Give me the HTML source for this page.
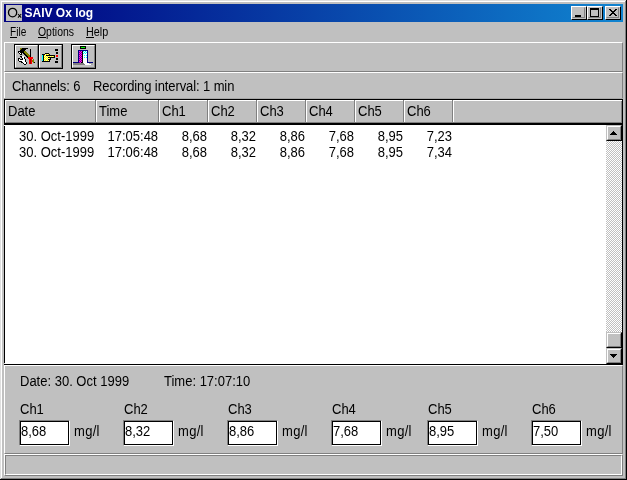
<!DOCTYPE html>
<html>
<head>
<meta charset="utf-8">
<title>SAIV Ox log</title>
<style>
html,body{margin:0;padding:0;}
body{width:627px;height:480px;overflow:hidden;background:#c0c0c0;position:relative;
  font-family:"Liberation Sans",sans-serif;font-size:13px;line-height:15px;color:#000;}
.a{position:absolute;}
.t{position:absolute;white-space:nowrap;line-height:15px;height:15px;filter:grayscale(1);transform:scaleY(1.06);transform-origin:0 12px;}
/* window frame */
#f0{left:0;top:0;width:627px;height:480px;background:#000;}
#f1{left:0;top:0;width:626px;height:479px;background:#dfdfdf;}
#f2{left:1px;top:1px;width:625px;height:478px;background:#808080;}
#f3{left:1px;top:1px;width:624px;height:477px;background:#fff;}
#f4{left:2px;top:2px;width:623px;height:476px;background:#c0c0c0;}
/* title */
#title{left:4px;top:4px;width:619px;height:18px;background:linear-gradient(to right,#000080 0%,#1084d0 100%);}
#ticon{left:6px;top:5px;width:16px;height:16px;background:#c0c0c0;}
#ttext{transform:none;left:24.5px;top:6px;color:#fff;font-weight:bold;font-size:12px;line-height:15px;}
.cb{position:absolute;top:6px;width:16px;height:14px;background:#c0c0c0;box-sizing:border-box;
  border:1px solid;border-color:#fff #000 #000 #fff;}
.cb i{position:absolute;left:0;top:0;width:13px;height:11px;box-sizing:border-box;border:1px solid;border-color:#c0c0c0 #808080 #808080 #c0c0c0;}
/* menu */
.m{position:absolute;top:25px;filter:grayscale(1);font-size:12px;line-height:15px;white-space:nowrap;transform-origin:0 50%;}
.ul{position:absolute;height:1px;background:#000;top:37px;}
/* raised panel */
.rp{position:absolute;box-sizing:border-box;border:1px solid;border-color:#fff #808080 #808080 #fff;background:#c0c0c0;}
/* toolbar buttons */
.tb{position:absolute;top:44px;width:25px;height:25px;box-sizing:border-box;border:1px solid #000;background:#c0c0c0;}
.tb i{position:absolute;left:0;top:0;width:23px;height:23px;box-sizing:border-box;border:1px solid;border-color:#fff #808080 #808080 #fff;}
/* header */
#hdr{left:4px;top:99px;width:619px;height:24px;box-sizing:border-box;border:1px solid #000;border-bottom:none;background:#c0c0c0;}
.hw{position:absolute;top:100px;width:1px;height:22px;background:#fff;}
.hg{position:absolute;top:100px;width:1px;height:22px;background:#808080;}
/* list */
#list{left:4px;top:123px;width:619px;height:242px;background:#fff;box-sizing:border-box;border:1px solid #000;border-top:2px solid #000;}
.sbb{position:absolute;left:606px;width:16px;height:16px;box-sizing:border-box;background:#c0c0c0;border:1px solid;border-color:#c0c0c0 #000 #000 #c0c0c0;}
.sbb i{position:absolute;left:0;top:0;width:14px;height:14px;box-sizing:border-box;border:1px solid;border-color:#fff #808080 #808080 #fff;}
#track{left:606px;top:141px;width:16px;height:191px;
  background-color:#c0c0c0;
  background-image:linear-gradient(45deg,#fff 25%,transparent 25%,transparent 75%,#fff 75%),linear-gradient(45deg,#fff 25%,transparent 25%,transparent 75%,#fff 75%);
  background-size:2px 2px;background-position:0 0,1px 1px;}
/* edit boxes */
.eb{position:absolute;top:420px;width:51px;height:26px;box-sizing:border-box;border:1px solid;border-color:#808080 #fff #fff #808080;background:#000;}
.eb i{position:absolute;left:1px;top:1px;width:47px;height:22px;background:#fff;}
</style>
</head>
<body>
<div class="a" id="f0"></div><div class="a" id="f1"></div><div class="a" id="f2"></div><div class="a" id="f3"></div><div class="a" id="f4"></div>

<!-- title bar -->
<div class="a" id="title"></div>
<div class="a" id="ticon"></div>
<svg class="a" style="left:6px;top:5px" width="16" height="16" viewBox="6 5 16 16"><ellipse cx="12.6" cy="12.6" rx="4.1" ry="4.3" fill="none" stroke="#000" stroke-width="1.35"/><path d="M18 14L21.2 17.6M21.2 14L18 17.6" stroke="#000" stroke-width="1.1" fill="none"/></svg>
<div class="t" id="ttext">SAIV Ox log</div>
<div class="cb" style="left:571px"><i></i><b class="a" style="left:3px;top:8px;width:6px;height:2px;background:#000"></b></div>
<div class="cb" style="left:587px"><i></i><b class="a" style="left:2px;top:1px;width:9px;height:9px;box-sizing:border-box;border:1px solid #000;border-top-width:2px"></b></div>
<div class="cb" style="left:605px"><i></i>
<svg class="a" style="left:3px;top:2px" width="8" height="7" viewBox="0 0 8 7"><path d="M0 0h2v1h-2zM6 0h2v1h-2zM1 1h2v1h-2zM5 1h2v1h-2zM2 2h4v1h-4zM3 3h2v1h-2zM2 4h4v1h-4zM1 5h2v1h-2zM5 5h2v1h-2zM0 6h2v1h-2zM6 6h2v1h-2z" fill="#000"/></svg></div>

<!-- menu -->
<div class="m" style="left:10px;transform:scaleX(0.84)">File</div>
<div class="m" style="left:38px;transform:scaleX(0.87)">Options</div>
<div class="m" style="left:86px;transform:scaleX(0.90)">Help</div>
<div class="ul" style="left:10px;width:7px"></div>
<div class="ul" style="left:38px;width:8px"></div>
<div class="ul" style="left:86px;width:8px"></div>

<!-- toolbar panel -->
<div class="rp" style="left:4px;top:42px;width:619px;height:30px"></div>
<div class="tb" style="left:14px"><i></i></div>
<div class="tb" style="left:38px"><i></i></div>
<div class="tb" style="left:71px"><i></i></div>

<!--ICONS-->
<svg class="a" style="left:17px;top:47px" width="18" height="18" viewBox="0 0 18 18" shape-rendering="crispEdges"><path fill="#808000" d="M3 1h2v1h-2zM3 2h1v1h-1zM7 4h2v1h-2zM7 5h3v1h-3zM8 6h3v1h-3zM9 7h3v1h-3zM10 8h3v1h-3zM11 9h2v1h-2zM16 12h1v1h-1zM15 13h2v1h-2zM15 14h2v1h-2zM16 15h1v1h-1z"/><path fill="#000" d="M5 1h6v1h-6zM4 2h5v1h-5zM13 2h1v1h-1zM3 3h5v1h-5zM13 3h1v1h-1zM1 4h6v1h-6zM13 4h1v1h-1zM1 5h1v1h-1zM3 5h4v1h-4zM13 5h1v1h-1zM2 6h1v1h-1zM4 6h1v1h-1zM6 6h2v1h-2zM13 6h1v1h-1zM3 7h2v1h-2zM7 7h2v1h-2zM13 7h1v1h-1zM8 8h2v1h-2zM13 8h1v1h-1zM3 9h2v1h-2zM9 9h2v1h-2zM13 9h1v1h-1zM4 10h1v1h-1zM7 10h1v1h-1zM10 10h1v1h-1zM1 11h2v1h-2zM5 11h1v1h-1zM7 11h1v1h-1zM1 12h1v1h-1zM3 12h3v1h-3zM8 12h1v1h-1zM1 13h1v1h-1zM8 13h1v1h-1zM2 14h3v1h-3zM8 14h1v1h-1zM4 15h2v1h-2zM9 15h1v1h-1zM17 15h1v1h-1zM6 16h1v1h-1zM9 16h1v1h-1zM7 17h2v1h-2z"/><path fill="#fff" d="M2 5h1v1h-1zM3 6h1v1h-1zM5 9h2v1h-2zM5 10h2v1h-2zM6 11h1v1h-1zM2 12h1v1h-1zM6 12h2v1h-2zM2 13h6v1h-6zM5 14h3v1h-3zM6 15h3v1h-3zM7 16h2v1h-2z"/><path fill="#ff0000" d="M11 10h5v1h-5zM11 11h5v1h-5zM12 12h1v1h-1zM14 12h1v1h-1zM12 13h1v1h-1zM14 13h1v1h-1zM12 14h1v1h-1zM14 14h1v1h-1zM12 15h1v1h-1zM14 15h1v1h-1zM12 16h1v1h-1zM14 16h1v1h-1z"/><path fill="#a00000" d="M13 12h1v1h-1zM13 13h1v1h-1zM13 14h1v1h-1zM13 15h1v1h-1zM13 16h1v1h-1z"/></svg>
<svg class="a" style="left:41px;top:48px" width="18" height="15" viewBox="0 0 18 15" shape-rendering="crispEdges"><path fill="#000" d="M14 1h3v1h-3zM14 2h3v1h-3zM15 4h2v1h-2zM4 5h4v1h-4zM15 5h2v1h-2zM1 6h3v1h-3zM8 6h1v1h-1zM2 7h1v1h-1zM5 7h9v1h-9zM2 8h1v1h-1zM13 8h1v1h-1zM2 9h1v1h-1zM7 9h7v1h-7zM2 10h1v1h-1zM9 10h1v1h-1zM15 10h2v1h-2zM2 11h1v1h-1zM7 11h3v1h-3zM15 11h2v1h-2zM2 12h1v1h-1zM8 12h1v1h-1zM1 13h8v1h-8zM14 13h3v1h-3zM14 14h3v1h-3z"/><path fill="#ffffa0" d="M4 6h1v1h-1zM6 6h1v1h-1zM4 7h1v1h-1zM3 8h1v1h-1zM5 8h1v1h-1zM7 8h1v1h-1zM9 8h1v1h-1zM11 8h1v1h-1zM4 9h1v1h-1zM6 9h1v1h-1zM3 10h1v1h-1zM5 10h1v1h-1zM7 10h1v1h-1zM4 11h1v1h-1zM6 11h1v1h-1zM3 12h1v1h-1zM5 12h1v1h-1zM7 12h1v1h-1z"/><path fill="#ffff00" d="M5 6h1v1h-1zM7 6h1v1h-1zM3 7h1v1h-1zM4 8h1v1h-1zM6 8h1v1h-1zM8 8h1v1h-1zM10 8h1v1h-1zM12 8h1v1h-1zM3 9h1v1h-1zM5 9h1v1h-1zM4 10h1v1h-1zM6 10h1v1h-1zM8 10h1v1h-1zM3 11h1v1h-1zM5 11h1v1h-1zM4 12h1v1h-1zM6 12h1v1h-1z"/><path fill="#00ffff" d="M1 7h1v1h-1zM1 8h1v1h-1zM1 9h1v1h-1zM1 10h1v1h-1zM1 11h1v1h-1zM1 12h1v1h-1z"/><path fill="#ff0000" d="M15 7h2v1h-2zM15 8h2v1h-2z"/></svg>
<svg class="a" style="left:73px;top:46px" width="21" height="19" viewBox="0 0 21 19" shape-rendering="crispEdges"><path fill="#000" d="M7 0h6v1h-6zM7 1h1v1h-1zM12 1h1v1h-1zM7 2h6v1h-6zM9 5h1v1h-1zM9 6h1v1h-1zM9 7h1v1h-1zM9 8h1v1h-1zM9 9h1v1h-1zM9 10h1v1h-1zM9 11h1v1h-1zM9 12h1v1h-1zM9 13h1v1h-1zM9 14h1v1h-1zM9 15h1v1h-1zM8 16h2v1h-2z"/><path fill="#00ff00" d="M8 1h4v1h-4z"/><path fill="#000080" d="M5 4h10v1h-10zM5 5h1v1h-1zM14 5h1v1h-1zM5 6h1v1h-1zM14 6h1v1h-1zM5 7h1v1h-1zM14 7h1v1h-1zM5 8h1v1h-1zM14 8h1v1h-1zM5 9h1v1h-1zM14 9h1v1h-1zM5 10h1v1h-1zM14 10h1v1h-1zM5 11h1v1h-1zM14 11h1v1h-1zM5 12h1v1h-1zM14 12h1v1h-1zM5 13h1v1h-1zM14 13h1v1h-1zM5 14h1v1h-1zM14 14h1v1h-1zM5 15h1v1h-1zM14 15h1v1h-1zM0 16h6v1h-6zM14 16h6v1h-6z"/><path fill="#ff00ff" d="M6 5h1v1h-1zM8 5h1v1h-1zM7 6h1v1h-1zM6 7h1v1h-1zM8 7h1v1h-1zM7 8h1v1h-1zM6 9h1v1h-1zM8 9h1v1h-1zM7 10h1v1h-1zM6 11h1v1h-1zM8 11h1v1h-1zM7 12h1v1h-1zM6 13h1v1h-1zM8 13h1v1h-1zM7 14h1v1h-1zM6 15h1v1h-1zM8 15h1v1h-1zM7 16h1v1h-1z"/><path fill="#800080" d="M7 5h1v1h-1zM6 6h1v1h-1zM8 6h1v1h-1zM7 7h1v1h-1zM6 8h1v1h-1zM8 8h1v1h-1zM7 9h1v1h-1zM6 10h1v1h-1zM8 10h1v1h-1zM7 11h1v1h-1zM6 12h1v1h-1zM8 12h1v1h-1zM7 13h1v1h-1zM6 14h1v1h-1zM8 14h1v1h-1zM7 15h1v1h-1zM6 16h1v1h-1z"/><path fill="#00ffff" d="M10 5h1v1h-1zM12 5h1v1h-1zM11 6h1v1h-1zM13 6h1v1h-1zM10 7h1v1h-1zM12 7h1v1h-1zM11 9h1v1h-1zM13 9h1v1h-1zM11 11h1v1h-1zM13 11h1v1h-1z"/><path fill="#fff" d="M11 5h1v1h-1zM13 5h1v1h-1zM10 6h1v1h-1zM12 6h1v1h-1zM11 7h1v1h-1zM13 7h1v1h-1zM10 8h4v1h-4zM10 9h1v1h-1zM12 9h1v1h-1zM10 10h4v1h-4zM10 11h1v1h-1zM12 11h1v1h-1zM10 12h4v1h-4zM10 13h4v1h-4zM10 14h4v1h-4zM10 15h4v1h-4zM10 16h4v1h-4zM11 17h5v1h-5zM12 18h6v1h-6z"/><path fill="#808080" d="M0 17h11v1h-11zM0 18h12v1h-12z"/><path fill="#a8a8a8" d="M16 17h4v1h-4zM18 18h2v1h-2z"/></svg>
<!--/ICONS-->

<!-- channels panel -->
<div class="rp" style="left:4px;top:72px;width:619px;height:26px;border-bottom:none"></div>
<div class="a" style="left:4px;top:98px;width:619px;height:1px;background:#a8a8a8"></div>
<div class="t" style="left:12px;top:79px;letter-spacing:-0.08px">Channels: 6</div>
<div class="t" style="left:93px;top:79px;letter-spacing:-0.1px">Recording interval: 1 min</div>

<!-- header -->
<div class="a" id="hdr"></div>
<div class="a" style="left:5px;top:100px;width:617px;height:1px;background:#fff"></div>
<div class="a" style="left:5px;top:100px;width:1px;height:22px;background:#fff"></div>
<div class="a" style="left:6px;top:122px;width:616px;height:1px;background:#808080"></div>
<div class="a" style="left:621px;top:101px;width:1px;height:22px;background:#808080"></div>
<div class="hg" style="left:95px"></div><div class="hw" style="left:96px"></div>
<div class="hg" style="left:158px"></div><div class="hw" style="left:159px"></div>
<div class="hg" style="left:207px"></div><div class="hw" style="left:208px"></div>
<div class="hg" style="left:256px"></div><div class="hw" style="left:257px"></div>
<div class="hg" style="left:305px"></div><div class="hw" style="left:306px"></div>
<div class="hg" style="left:354px"></div><div class="hw" style="left:355px"></div>
<div class="hg" style="left:403px"></div><div class="hw" style="left:404px"></div>
<div class="hg" style="left:452px"></div><div class="hw" style="left:453px"></div>
<div class="t" style="left:8px;top:104px">Date</div>
<div class="t" style="left:99px;top:104px">Time</div>
<div class="t" style="left:162px;top:104px">Ch1</div>
<div class="t" style="left:211px;top:104px">Ch2</div>
<div class="t" style="left:260px;top:104px">Ch3</div>
<div class="t" style="left:309px;top:104px">Ch4</div>
<div class="t" style="left:358px;top:104px">Ch5</div>
<div class="t" style="left:407px;top:104px">Ch6</div>

<!-- list -->
<div class="a" id="list"></div>
<div class="a" style="left:4px;top:125px;width:1px;height:1px;background:#fff"></div><div class="a" style="left:4px;top:363px;width:1px;height:1px;background:#e0e0e0"></div>
<div class="sbb" style="top:125px"><i></i><svg class="a" style="left:3px;top:5px" width="7" height="4" viewBox="0 0 7 4"><path d="M3 0h1v1h-1zM2 1h3v1h-3zM1 2h5v1h-5zM0 3h7v1h-7z" fill="#000"/></svg></div>
<div class="a" id="track"></div>
<div class="sbb" style="top:332px"><i></i></div>
<div class="sbb" style="top:348px"><i></i><svg class="a" style="left:3px;top:5px" width="7" height="4" viewBox="0 0 7 4"><path d="M0 0h7v1h-7zM1 1h5v1h-5zM2 2h3v1h-3zM3 3h1v1h-1z" fill="#000"/></svg></div>

<div class="t" style="left:19px;top:129px">30. Oct-1999</div>
<div class="t" style="left:107.5px;top:129px">17:05:48</div>
<div class="t" style="right:420px;top:129px">8,68</div>
<div class="t" style="right:371px;top:129px">8,32</div>
<div class="t" style="right:322px;top:129px">8,86</div>
<div class="t" style="right:273px;top:129px">7,68</div>
<div class="t" style="right:224px;top:129px">8,95</div>
<div class="t" style="right:175px;top:129px">7,23</div>
<div class="t" style="left:19px;top:145px">30. Oct-1999</div>
<div class="t" style="left:107.5px;top:145px">17:06:48</div>
<div class="t" style="right:420px;top:145px">8,68</div>
<div class="t" style="right:371px;top:145px">8,32</div>
<div class="t" style="right:322px;top:145px">8,86</div>
<div class="t" style="right:273px;top:145px">7,68</div>
<div class="t" style="right:224px;top:145px">8,95</div>
<div class="t" style="right:175px;top:145px">7,34</div>

<!-- bottom panel -->
<div class="rp" style="left:4px;top:365px;width:619px;height:89px"></div>
<div class="t" style="left:20px;top:374px">Date: 30. Oct 1999</div>
<div class="t" style="left:164px;top:374px">Time: 17:07:10</div>

<div class="t" style="left:20px;top:402px">Ch1</div>
<div class="t" style="left:124px;top:402px">Ch2</div>
<div class="t" style="left:228px;top:402px">Ch3</div>
<div class="t" style="left:332px;top:402px">Ch4</div>
<div class="t" style="left:428px;top:402px">Ch5</div>
<div class="t" style="left:532px;top:402px">Ch6</div>

<div class="eb" style="left:19px"><i></i></div>
<div class="eb" style="left:123px"><i></i></div>
<div class="eb" style="left:227px"><i></i></div>
<div class="eb" style="left:331px"><i></i></div>
<div class="eb" style="left:427px"><i></i></div>
<div class="eb" style="left:531px"><i></i></div>

<div class="t" style="left:21px;top:424px">8,68</div>
<div class="t" style="left:125px;top:424px">8,32</div>
<div class="t" style="left:229px;top:424px">8,86</div>
<div class="t" style="left:333px;top:424px">7,68</div>
<div class="t" style="left:429px;top:424px">8,95</div>
<div class="t" style="left:533px;top:424px">7,50</div>

<div class="t" style="left:74px;top:424px;letter-spacing:0.3px">mg/l</div>
<div class="t" style="left:178px;top:424px;letter-spacing:0.3px">mg/l</div>
<div class="t" style="left:282px;top:424px;letter-spacing:0.3px">mg/l</div>
<div class="t" style="left:386px;top:424px;letter-spacing:0.3px">mg/l</div>
<div class="t" style="left:482px;top:424px;letter-spacing:0.3px">mg/l</div>
<div class="t" style="left:586px;top:424px;letter-spacing:0.3px">mg/l</div>

<!-- status bar -->
<div class="rp" style="left:4px;top:454px;width:619px;height:22px"></div>
<div class="a" style="left:5px;top:455px;width:617px;height:20px;box-sizing:border-box;border:1px solid;border-color:#808080 #fff #fff #808080"></div>
</body>
</html>
